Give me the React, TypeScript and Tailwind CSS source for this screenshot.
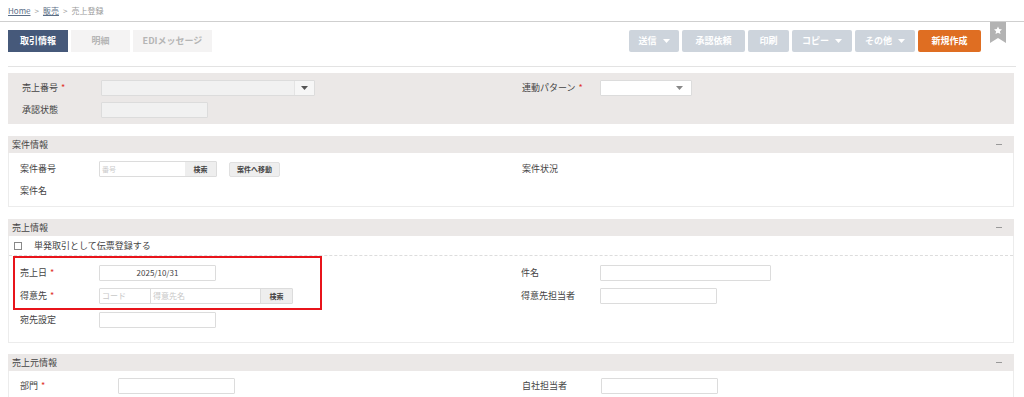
import React from "react";

const font = { fontFamily: '"Noto Sans CJK JP", "Noto Sans", sans-serif' };

function Req() {
  return <span className="text-[#e0332a] ml-[3px]">*</span>;
}

function Caret({ className = "" }: { className?: string }) {
  return (
    <svg width="7" height="4" viewBox="0 0 7 4" className={className}>
      <path d="M0 0h7L3.5 4z" fill="currentColor" />
    </svg>
  );
}

function Box({ w, gray = false, className = "", children }: { w: string; gray?: boolean; className?: string; children?: React.ReactNode }) {
  return (
    <div className={`h-[16px] border border-[#dcdcdc] rounded-[1px] ${gray ? "bg-[#f1f1f1]" : "bg-white"} ${w} ${className}`}>{children}</div>
  );
}

function SectionHead({ title }: { title: string }) {
  return (
    <div className="h-[17px] bg-[#ebe8e7] flex items-center justify-between pl-[4px] pr-[12px] text-[9px] text-[#444]">
      <span>{title}</span>
      <span className="w-[6px] h-[1px] bg-[#999]" />
    </div>
  );
}

export default function App() {
  return (
    <div style={font} className="w-[1024px] h-[397px] bg-white overflow-hidden text-[#444]">
      {/* breadcrumb */}
      <div className="h-[22px] flex items-center pl-[8px] gap-[4px] text-[8px] text-[#999] border-b border-[#cfcfcf]">
        <span className="underline text-[#5b6e87]">Home</span>
        <span>&gt;</span>
        <span className="underline text-[#5b6e87]">販売</span>
        <span>&gt;</span>
        <span>売上登録</span>
      </div>

      {/* toolbar */}
      <div className="mx-[8px] h-[45px] flex items-start pt-[8px] border-b border-[#e3e3e3]">
        <div className="flex gap-[3px] text-[9px] font-bold">
          <div className="w-[60px] h-[22px] flex items-center justify-center bg-[#46597a] text-white">取引情報</div>
          <div className="w-[59px] h-[22px] flex items-center justify-center bg-[#f4f3f3] text-[#b5b5b5]">明細</div>
          <div className="w-[79px] h-[22px] flex items-center justify-center bg-[#f4f3f3] text-[#b5b5b5]">EDIメッセージ</div>
        </div>
        <div className="ml-auto flex gap-[3px] text-[9px] font-bold text-white mr-[35px]">
          <div className="w-[50px] h-[22px] rounded-[2px] bg-[#cdd4dc] flex items-center justify-center gap-[6px]">送信<Caret /></div>
          <div className="w-[63px] h-[22px] rounded-[2px] bg-[#cdd4dc] flex items-center justify-center">承認依頼</div>
          <div className="w-[41px] h-[22px] rounded-[2px] bg-[#cdd4dc] flex items-center justify-center">印刷</div>
          <div className="w-[60px] h-[22px] rounded-[2px] bg-[#cdd4dc] flex items-center justify-center gap-[6px]">コピー<Caret /></div>
          <div className="w-[60px] h-[22px] rounded-[2px] bg-[#cdd4dc] flex items-center justify-center gap-[6px]">その他<Caret /></div>
          <div className="w-[63px] h-[22px] rounded-[2px] bg-[#df6e22] flex items-center justify-center">新規作成</div>
        </div>
        <svg width="16" height="21" viewBox="0 0 16 21" className="absolute left-[990px] top-[22px]">
          <path d="M0 0h16v21l-8-5-8 5z" fill="#b3b3b3" />
          <path d="M8 4.5l1.2 2.6 2.8.3-2.1 1.9.6 2.8L8 10.7l-2.5 1.4.6-2.8L4 7.4l2.8-.3z" fill="#fff" />
        </svg>
      </div>

      {/* top box */}
      <div className="mx-[8px] mt-[6px] w-[1006px] h-[51px] bg-[#ebe8e7] text-[9px] pt-[7px]">
        <div className="flex h-[22px] items-start">
          <div className="w-[500px] flex items-center pl-[14px]">
            <span className="w-[79px]">売上番号<Req /></span>
            <Box w="w-[214px]" gray className="flex">
              <span className="flex-1" />
              <span className="w-[20px] border-l border-[#e4e4e4] bg-[#f6f6f6] flex items-center justify-center text-[#555]">
                <Caret />
              </span>
            </Box>
          </div>
          <div className="flex items-center pl-[14px]">
            <span className="w-[78px]">連動パターン<Req /></span>
            <Box w="w-[92px]" className="flex justify-end items-center pr-[8px] text-[#888]">
              <Caret />
            </Box>
          </div>
        </div>
        <div className="flex items-center pl-[14px]">
          <span className="w-[79px]">承認状態</span>
          <Box w="w-[107px]" gray />
        </div>
      </div>

      {/* 案件情報 */}
      <div className="mx-[8px] mt-[12px] w-[1006px] text-[9px]">
        <SectionHead title="案件情報" />
        <div className="h-[54px] border border-t-0 border-[#ececec] pt-[8px] pl-[11px]">
          <div className="flex items-center h-[16px]">
            <div className="w-[502px] flex items-center">
              <span className="w-[79px]">案件番号</span>
              <div className="flex h-[16px] border border-[#dcdcdc] rounded-[1px]">
                <span className="w-[85px] pl-[2px] text-[7px] text-[#ccc] flex items-center">番号</span>
                <span className="w-[31px] bg-[#eeeeee] text-[7px] font-bold flex items-center justify-center">検索</span>
              </div>
              <span className="ml-[12px] w-[51px] h-[15px] rounded-[2px] bg-[#eeeeee] border border-[#e0e0e0] text-[7px] font-bold flex items-center justify-center">案件へ移動</span>
            </div>
            <span>案件状況</span>
          </div>
          <div className="mt-[7px]">案件名</div>
        </div>
      </div>

      {/* 売上情報 */}
      <div className="mx-[8px] mt-[12px] w-[1006px] text-[9px]">
        <SectionHead title="売上情報" />
        <div className="h-[107px] border border-t-0 border-[#ececec]">
          <div className="h-[20px] flex items-center pl-[5px] border-b border-dashed border-[#dddddd]">
            <span className="w-[8px] h-[8px] border border-[#888] bg-white mr-[12px]" />
            <span>単発取引として伝票登録する</span>
          </div>
          <div className="flex">
            <div className="w-[512px] pl-[4px]">
              <div className="w-[309px] h-[54px] border-2 border-[#e8141b] pl-[5px] pt-[7px]">
                <div className="flex items-center h-[16px]">
                  <span className="w-[79px]">売上日<Req /></span>
                  <Box w="w-[117px]" className="flex items-center justify-center text-[8px]">2025/10/31</Box>
                </div>
                <div className="flex items-center h-[16px] mt-[7px]">
                  <span className="w-[79px]">得意先<Req /></span>
                  <div className="flex h-[16px] border border-[#dcdcdc] rounded-[1px] text-[8px] text-[#c8c8c8]">
                    <span className="w-[51px] pl-[2px] flex items-center border-r border-[#dcdcdc]">コード</span>
                    <span className="w-[109px] pl-[2px] flex items-center">得意先名</span>
                    <span className="w-[32px] bg-[#eeeeee] border-l border-[#dcdcdc] text-[7px] font-bold text-[#444] flex items-center justify-center">検索</span>
                  </div>
                </div>
              </div>
              <div className="flex items-center h-[16px] mt-[2px] pl-[7px]">
                <span className="w-[79px]">宛先設定</span>
                <Box w="w-[117px]" />
              </div>
            </div>
            <div className="pt-[9px]">
              <div className="flex items-center h-[16px]">
                <span className="w-[79px]">件名</span>
                <Box w="w-[171px]" />
              </div>
              <div className="flex items-center h-[16px] mt-[7px]">
                <span className="w-[79px]">得意先担当者</span>
                <Box w="w-[117px]" />
              </div>
            </div>
          </div>
        </div>
      </div>

      {/* 売上元情報 */}
      <div className="mx-[8px] mt-[11px] w-[1006px] text-[9px]">
        <SectionHead title="売上元情報" />
        <div className="h-[40px] border border-t-0 border-[#ececec] pt-[7px] pl-[11px]">
          <div className="flex items-center h-[16px]">
            <div className="w-[502px] flex items-center">
              <span className="w-[98px]">部門<Req /></span>
              <Box w="w-[117px]" />
            </div>
            <span className="w-[79px]">自社担当者</span>
            <Box w="w-[117px]" />
          </div>
        </div>
      </div>
    </div>
  );
}
